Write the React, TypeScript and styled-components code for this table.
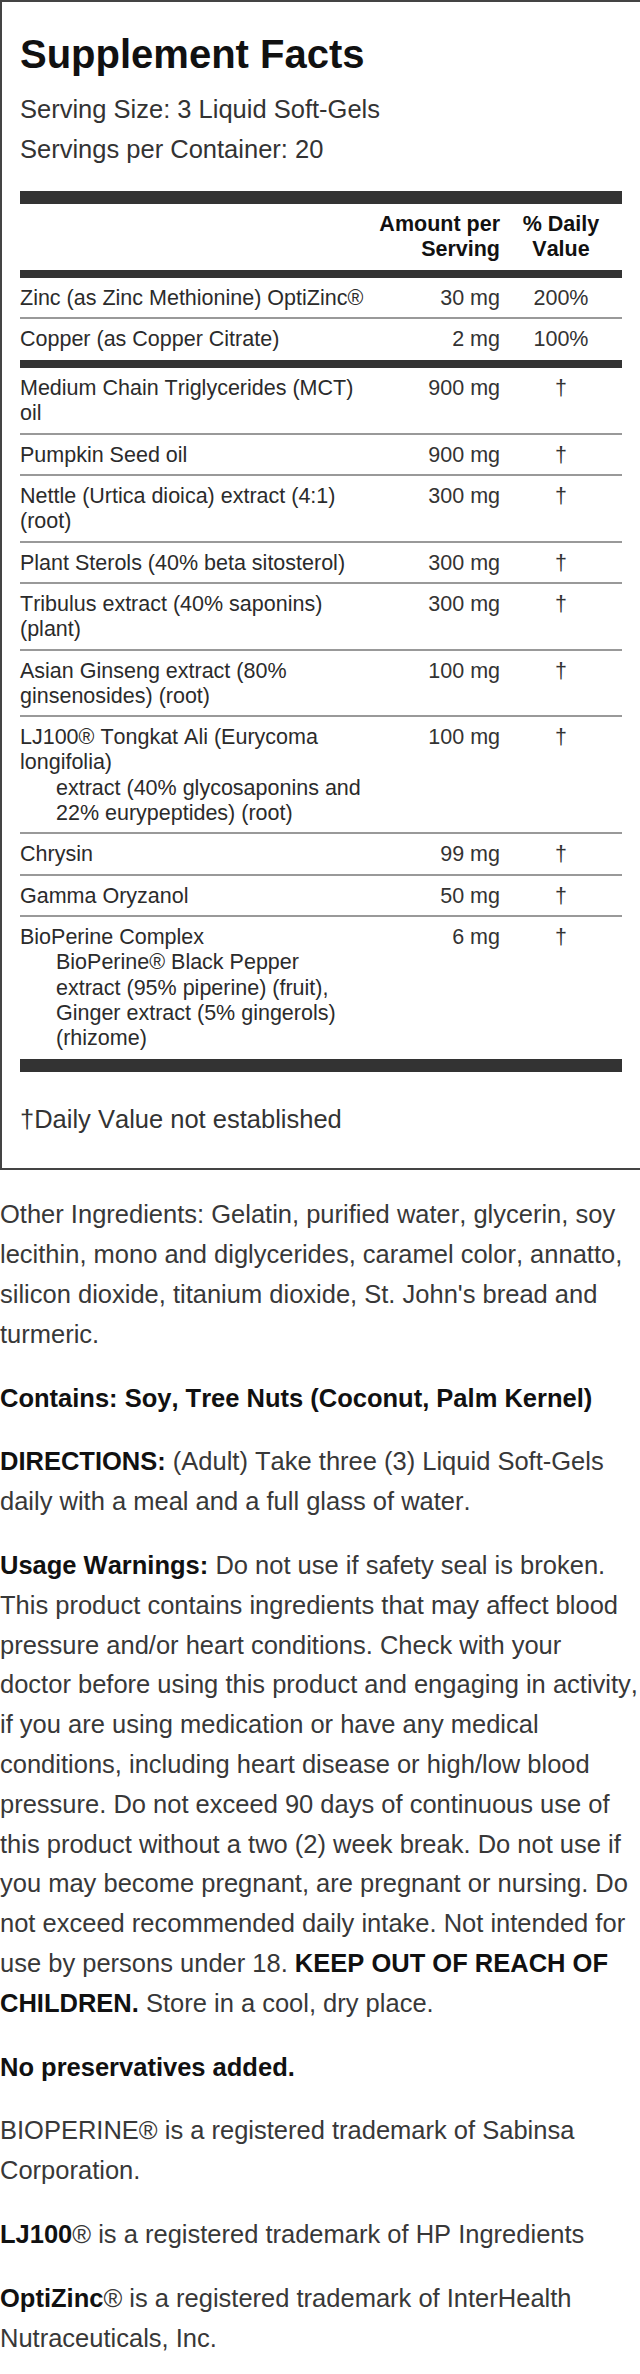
import styled, { createGlobalStyle } from "styled-components"

type Fact = {
    name: string,
    sub?: string,
    amount: string,
    dv: string
}

const minerals: Fact[] = [
    { name: "Zinc (as Zinc Methionine) OptiZinc®", amount: "30 mg", dv: "200%" },
    { name: "Copper (as Copper Citrate)", amount: "2 mg", dv: "100%" },
]

const blend: Fact[] = [
    { name: "Medium Chain Triglycerides (MCT) oil", amount: "900 mg", dv: "†" },
    { name: "Pumpkin Seed oil", amount: "900 mg", dv: "†" },
    { name: "Nettle (Urtica dioica) extract (4:1) (root)", amount: "300 mg", dv: "†" },
    { name: "Plant Sterols (40% beta sitosterol)", amount: "300 mg", dv: "†" },
    { name: "Tribulus extract (40% saponins) (plant)", amount: "300 mg", dv: "†" },
    { name: "Asian Ginseng extract (80% ginsenosides) (root)", amount: "100 mg", dv: "†" },
    {
        name: "LJ100® Tongkat Ali (Eurycoma longifolia)",
        sub: "extract (40% glycosaponins and 22% eurypeptides) (root)",
        amount: "100 mg",
        dv: "†"
    },
    { name: "Chrysin", amount: "99 mg", dv: "†" },
    { name: "Gamma Oryzanol", amount: "50 mg", dv: "†" },
    {
        name: "BioPerine Complex",
        sub: "BioPerine® Black Pepper extract (95% piperine) (fruit), Ginger extract (5% gingerols) (rhizome)",
        amount: "6 mg",
        dv: "†"
    },
]

function FactRows(props: { items: Fact[] }) {
    return (
        <RowGroup>
            {props.items.map((item) => (
                <FactRow key={item.name}>
                    <NameCell>
                        {item.name}
                        {item.sub && <SubText>{item.sub}</SubText>}
                    </NameCell>
                    <AmountCell>{item.amount}</AmountCell>
                    <ValueCell>{item.dv}</ValueCell>
                </FactRow>
            ))}
        </RowGroup>
    )
}

export default function App() {
    return (
        <Page>
            <GlobalStyle />
            <Panel>
                <Title>Supplement Facts</Title>
                <ServingInfo>
                    <div>Serving Size: 3 Liquid Soft-Gels</div>
                    <div>Servings per Container: 20</div>
                </ServingInfo>
                <Bar $h={13} />
                <FactsHead>
                    <span />
                    <AmountCell>Amount per Serving</AmountCell>
                    <ValueCell>% Daily Value</ValueCell>
                </FactsHead>
                <Bar $h={8} />
                <FactRows items={minerals} />
                <Bar $h={8} />
                <FactRows items={blend} />
                <Bar $h={13} />
                <Footnote>†Daily Value not established</Footnote>
            </Panel>

            <Notes>
                <Note>
                    Other Ingredients: Gelatin, purified water, glycerin, soy lecithin, mono and diglycerides,
                    caramel color, annatto, silicon dioxide, titanium dioxide, St. John's bread and turmeric.
                </Note>
                <Note>
                    <Strong>Contains: Soy, Tree Nuts (Coconut, Palm Kernel)</Strong>
                </Note>
                <Note>
                    <Strong>DIRECTIONS:</Strong> (Adult) Take three (3) Liquid Soft-Gels daily with a meal and a
                    full glass of water.
                </Note>
                <Note>
                    <Strong>Usage Warnings:</Strong> Do not use if safety seal is broken. This product contains
                    ingredients that may affect blood pressure and/or heart conditions. Check with your doctor
                    before using this product and engaging in activity, if you are using medication or have any
                    medical conditions, including heart disease or high/low blood pressure. Do not exceed 90 days
                    of continuous use of this product without a two (2) week break. Do not use if you may become
                    pregnant, are pregnant or nursing. Do not exceed recommended daily intake. Not intended for
                    use by persons under 18. <Strong>KEEP OUT OF REACH OF CHILDREN.</Strong> Store in a cool,
                    dry place.
                </Note>
                <Note>
                    <Strong>No preservatives added.</Strong>
                </Note>
                <Note>BIOPERINE® is a registered trademark of Sabinsa Corporation.</Note>
                <Note>
                    <Strong>LJ100</Strong>® is a registered trademark of HP Ingredients
                </Note>
                <Note>
                    <Strong>OptiZinc</Strong>® is a registered trademark of InterHealth Nutraceuticals, Inc.
                </Note>
            </Notes>
        </Page>
    )
}

const GlobalStyle = createGlobalStyle`
    html, body {
        margin: 0;
        padding: 0;
        background: #fff;
    }
    body {
        font-family: "Liberation Sans", Arial, sans-serif;
        font-kerning: none;
        color: #333;
        overflow-x: hidden;
    }
`
const Page = styled.main`
    width: 640px;
`
const Panel = styled.section`
    box-sizing: border-box;
    width: 640px;
    border: 2px solid #444;
    border-right: none;
    padding: 30px 18px 29px 18px;
`
const Title = styled.h1`
    margin: 0;
    font-size: 40px;
    line-height: 45px;
    font-weight: 700;
    color: #111;
`
const ServingInfo = styled.div`
    margin: 12px 0 22px;
    font-size: 25.5px;
    line-height: 40px;
`
const Bar = styled.div<{ $h: number }>`
    height: ${(p) => p.$h}px;
    background: #333;
`
const Grid = styled.div`
    display: grid;
    grid-template-columns: 347px 1fr 122px;
    font-size: 21.5px;
    line-height: 25.3px;
`
const FactsHead = styled(Grid)`
    padding: 8px 0 7px;
    font-weight: 700;
    color: #111;
`
const RowGroup = styled.div`
    padding-bottom: 2px;
`
const FactRow = styled(Grid)`
    padding: 8px 0 6px;
    & + & {
        border-top: 2px solid #999;
    }
`
const NameCell = styled.div`
    color: #2b2b2b;
`
const SubText = styled.div`
    padding-left: 36px;
`
const AmountCell = styled.div`
    text-align: right;
`
const ValueCell = styled.div`
    text-align: center;
`
const Footnote = styled.p`
    margin: 27px 0 0;
    font-size: 25.5px;
    line-height: 40px;
`
const Notes = styled.div`
    padding-top: 25px;
    width: 638.5px;
`
const Note = styled.p`
    margin: 0 0 24px;
    font-size: 25.5px;
    line-height: 39.8px;
    color: #383838;
`
const Strong = styled.b`
    font-weight: 700;
    color: #111;
`
